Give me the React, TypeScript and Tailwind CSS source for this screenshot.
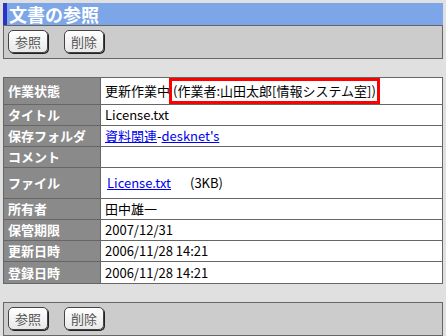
const font = "font-['Noto_Sans_CJK_JP','Noto_Sans',sans-serif]";

const Btn = ({ label }: { label: string }) => (
  <button className="h-[23px] w-[40px] rounded-[5px] border border-[#444] bg-gradient-to-b from-white to-[#e8e8e8] text-[13px] leading-none text-[#555] shadow-[1px_1px_0_#222]">
    {label}
  </button>
);

const Toolbar = ({ top }: { top?: boolean }) => (
  <div
    className={`flex h-[34px] items-start gap-[16px] border border-[#666] bg-[#cccccc] pl-[4px] pt-[4px] ${
      top ? "border-t" : ""
    }`}
  >
    <Btn label="参照" />
    <Btn label="削除" />
  </div>
);

const Row = ({
  label,
  h,
  children,
}: {
  label: string;
  h: string;
  children?: React.ReactNode;
}) => (
  <tr className={h}>
    <td className="w-[97px] border border-[#666] bg-[#8a8a8a] pl-[4px] text-[13px] font-bold text-white">
      {label}
    </td>
    <td className="border border-[#666] bg-white pl-[4px] text-[13px] text-black">
      {children}
    </td>
  </tr>
);

const App = () => {
  return (
    <div className={`h-[336px] w-[446px] bg-[#e0e0e0] px-[3px] pt-[3px] ${font}`}>
      <div className="w-[440px]">
        <div className="flex h-[22px] items-center border-l-[4px] border-[#2b35c4] bg-[#7da6e8] pl-[2px] text-[18px] font-bold leading-none text-white">
          文書の参照
        </div>
        <Toolbar />
        <table className="mt-[18px] w-[440px] border-collapse">
          <tbody>
            <Row label="作業状態" h="h-[25px]">
              更新作業中
              <span className="relative -ml-[1px] inline-block border-[3px] border-[#ff0000] px-[1px] leading-[20px]">
                (作業者:山田太郎[情報システム室])
              </span>
            </Row>
            <Row label="タイトル" h="h-[21px]">
              License.txt
            </Row>
            <Row label="保存フォルダ" h="h-[21px]">
              <a className="text-[#0000ee] underline">資料関連</a>-
              <a className="text-[#0000ee] underline">desknet's</a>
            </Row>
            <Row label="コメント" h="h-[21px]" />
            <Row label="ファイル" h="h-[31px]">
              <span className="pl-[2px] text-[#0000ee] underline">License.txt</span>
              <span className="ml-[19px]">(3KB)</span>
            </Row>
            <Row label="所有者" h="h-[21px]">
              田中雄一
            </Row>
            <Row label="保管期限" h="h-[21px]">
              2007/12/31
            </Row>
            <Row label="更新日時" h="h-[21px]">
              2006/11/28 14:21
            </Row>
            <Row label="登録日時" h="h-[22px]">
              2006/11/28 14:21
            </Row>
          </tbody>
        </table>
        <div className="mt-[18px]">
          <Toolbar top />
        </div>
      </div>
    </div>
  );
};

export default App;
